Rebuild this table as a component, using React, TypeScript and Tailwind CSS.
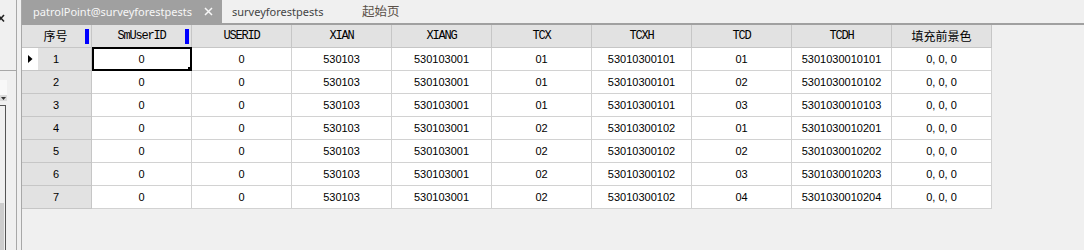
import React from "react";

const headers = ["SmUserID", "USERID", "XIAN", "XIANG", "TCX", "TCXH", "TCD", "TCDH"];

const rows: string[][] = [
  ["1", "0", "0", "530103", "530103001", "01", "53010300101", "01", "5301030010101", "0, 0, 0"],
  ["2", "0", "0", "530103", "530103001", "01", "53010300101", "02", "5301030010102", "0, 0, 0"],
  ["3", "0", "0", "530103", "530103001", "01", "53010300101", "03", "5301030010103", "0, 0, 0"],
  ["4", "0", "0", "530103", "530103001", "02", "53010300102", "01", "5301030010201", "0, 0, 0"],
  ["5", "0", "0", "530103", "530103001", "02", "53010300102", "02", "5301030010202", "0, 0, 0"],
  ["6", "0", "0", "530103", "530103001", "02", "53010300102", "03", "5301030010203", "0, 0, 0"],
  ["7", "0", "0", "530103", "530103001", "02", "53010300102", "04", "5301030010204", "0, 0, 0"],
];

const cellFont = "font-['Liberation_Sans',Arial,sans-serif] text-[11px] text-black";
const headFont = "font-['Liberation_Mono',monospace] text-[12px] tracking-[-1.2px] text-black";
const cjk = "font-['Noto_Sans_CJK_SC',sans-serif]";

function LeftPanel() {
  return (
    <div className="w-[17px] h-full border-r border-[#a8a8a8] bg-[#f0f0f0] flex flex-col overflow-hidden">
      <div className="h-[71px] border-b border-[#a8a8a8] relative">
        <svg className="absolute left-0 top-[14px]" width="6" height="9" viewBox="0 0 6 9">
          <path d="M-2 1 L4 7.5 M4 1 L-2 7.5" stroke="#222" strokeWidth="1.6" fill="none" />
        </svg>
      </div>
      <div className="h-[9px]" />
      <div className="h-[15px] w-[7px] bg-[#f8f8f8]" />
      <div className="h-[6px] w-[7px] bg-[#dadada] flex items-center justify-center">
        <svg width="5" height="3" viewBox="0 0 5 3">
          <path d="M0 0 H5 L2.5 3 Z" fill="#333" />
        </svg>
      </div>
      <div className="h-[4px]" />
      <div className="flex-1 w-[6px] border-t border-r border-[#555] flex flex-col">
        <div className="flex-1" />
        <div className="h-[47px] w-[4px] bg-[#cdcdcd]" />
      </div>
    </div>
  );
}

function TabBar() {
  return (
    <div className="h-[25px] flex flex-col">
      <div className="h-[23px] flex items-stretch">
        <div className="w-[200px] bg-[#a0a0a0] flex items-center pl-[11px] pr-[9px]">
          <span className="font-['Noto_Sans',sans-serif] text-[11px] text-[#f7f7f7] leading-none flex-1">
            patrolPoint@surveyforestpests
          </span>
          <svg width="9" height="9" viewBox="0 0 9 9">
            <path d="M1 1 L8 8 M8 1 L1 8" stroke="#f7f7f7" strokeWidth="1.5" fill="none" />
          </svg>
        </div>
        <div className="pl-[10px] w-[140px] flex items-center">
          <span className="font-['Noto_Sans',sans-serif] text-[11px] text-[#444] leading-none">
            surveyforestpests
          </span>
        </div>
        <div className="flex items-center">
          <span className={`${cjk} text-[12.5px] text-[#5a5048] leading-none`}>起始页</span>
        </div>
      </div>
      <div className="h-[2px] bg-[#a0a0a0]" />
    </div>
  );
}

function HeaderRow() {
  return (
    <div className="flex h-[23px]">
      <div className="w-[70px] h-full bg-[#e2e2e2] border-r border-b border-[#c6c6c6] flex items-center relative">
        <span className={`${cjk} text-[12px] text-black leading-none w-full text-center pr-[2px]`}>序号</span>
        <div className="absolute right-[2px] top-[4px] w-[4px] h-[15px] bg-[#0000ff]" />
      </div>
      {headers.map((h, i) => (
        <div
          key={h}
          className="w-[100px] h-full bg-[#e2e2e2] border-r border-b border-[#c6c6c6] flex items-center justify-center relative"
        >
          <span className={`${headFont} leading-none`}>{h}</span>
          {i === 0 && <div className="absolute right-[2px] top-[4px] w-[4px] h-[15px] bg-[#0000ff]" />}
        </div>
      ))}
      <div className="w-[100px] h-full bg-[#e2e2e2] border-r border-b border-[#c6c6c6] flex items-center justify-center">
        <span className={`${cjk} text-[12px] text-black leading-none`}>填充前景色</span>
      </div>
    </div>
  );
}

function DataRow({ r, idx }: { r: string[]; idx: number }) {
  const first = idx === 0;
  return (
    <div className="flex h-[23px]">
      <div className="w-[70px] h-full bg-[#e2e2e2] border-r border-b border-[#c6c6c6] flex items-stretch">
        {first ? (
          <div className="w-[16px] bg-white flex items-center justify-center">
            <svg width="5" height="8" viewBox="0 0 5 8">
              <path d="M0 0 L4.5 4 L0 8 Z" fill="#000" />
            </svg>
          </div>
        ) : (
          <div className="w-[16px]" />
        )}
        <div className={`flex-1 flex items-center justify-center pr-[17px] ${cellFont}`}>{r[0]}</div>
      </div>
      {r.slice(1).map((v, j) => {
        const selected = first && j === 0;
        return (
          <div
            key={j}
            className="w-[100px] h-full bg-white border-r border-b border-[#d2d2d2] flex items-center justify-center relative"
          >
            <span className={`${cellFont} leading-none`}>{v}</span>
            {selected && (
              <>
                <div className="absolute left-0 top-[-1px] right-[-1px] bottom-[-1px] border-2 border-black" />
                <div className="absolute right-[-1px] bottom-[-1px] w-[4px] h-[4px] bg-black" />
              </>
            )}
          </div>
        );
      })}
    </div>
  );
}

export default function App() {
  return (
    <div className="w-[1084px] h-[250px] bg-[#f0f0f0] flex overflow-hidden">
      <LeftPanel />
      <div className="w-[5px] h-full border-r border-[#a8a8a8]" />
      <div className="flex-1 flex flex-col">
        <TabBar />
        <div className="flex flex-col">
          <HeaderRow />
          {rows.map((r, i) => (
            <DataRow key={i} r={r} idx={i} />
          ))}
        </div>
      </div>
    </div>
  );
}
